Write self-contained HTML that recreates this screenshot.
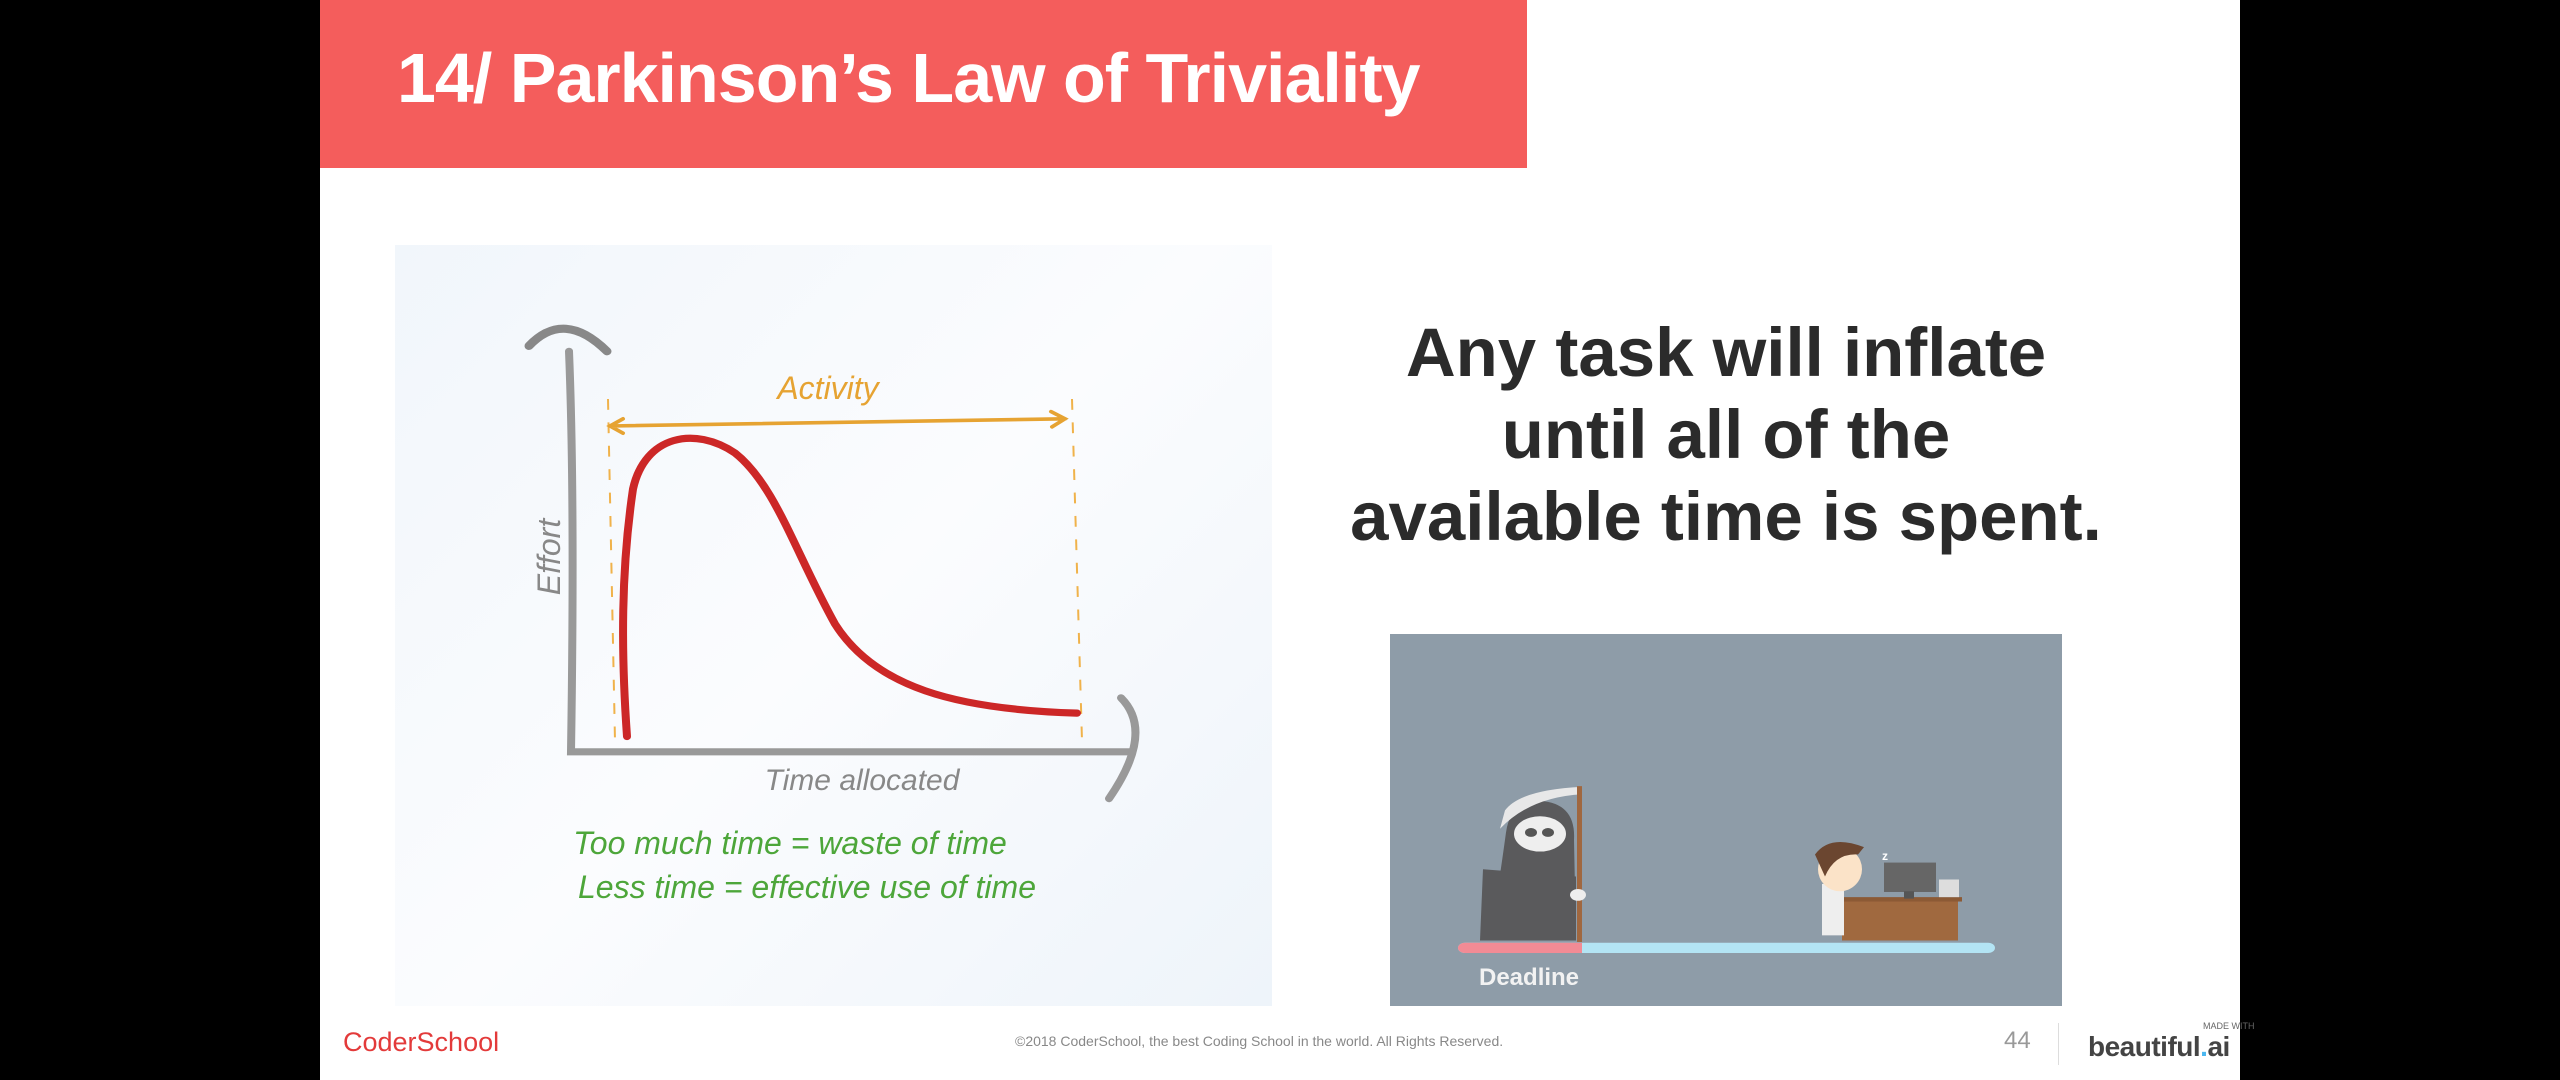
<!DOCTYPE html>
<html><head><meta charset="utf-8"><style>
*{margin:0;padding:0;box-sizing:border-box}
body{width:2560px;height:1080px;background:#000;position:relative;overflow:hidden;font-family:"Liberation Sans",sans-serif}
#slide{position:absolute;left:320px;top:0;width:1920px;height:1080px;background:#fff}
#bar{position:absolute;left:320px;top:0;width:1207px;height:168px;background:#f45d5c}
#title{position:absolute;left:397px;top:38px;font-size:70px;font-weight:bold;color:#fff;white-space:nowrap;letter-spacing:-1px}
#chart{position:absolute;left:395px;top:245px;width:877px;height:761px;background:linear-gradient(135deg,#f1f6fb,#fbfcfe 50%,#eef4fa)}
#quote{position:absolute;left:1290px;top:312px;width:872px;text-align:center;font-size:69px;font-weight:bold;color:#2b2b2b;line-height:82px}
#anim{position:absolute;left:1390px;top:634px;width:672px;height:372px;background:#8e9ca8}
.ft{position:absolute;white-space:nowrap}
</style></head><body>
<div id="slide"></div>
<div id="bar"></div>
<div id="title">14/ Parkinson’s Law of Triviality</div>
<div id="chart"><svg width="877" height="761" viewBox="0 0 877 761">
<g transform="translate(0,-17) scale(1,0.9)">
<path d="M134 131 Q169 90 212 137" stroke="#888" stroke-width="9" fill="none" stroke-linecap="round"/>
<path d="M174 137 Q180 300 176 582 L737 582" stroke="#999" stroke-width="8" fill="none" stroke-linecap="round"/>
<path d="M726 522 Q760 560 714 634" stroke="#999" stroke-width="8" fill="none" stroke-linecap="round"/>
<path d="M213 190 L220 570 M677 190 L687 570" stroke="#f0b24a" stroke-width="2" stroke-dasharray="12 14" fill="none"/>
<path d="M215 220 L670 212 M228 212 L215 220 L228 228 M656 204 L670 212 L657 221" stroke="#e6a332" stroke-width="4" fill="none" stroke-linecap="round"/>
<path d="M232 565 C226 470 226 380 238 290 C250 230 300 220 340 250 C380 285 400 360 440 440 C480 510 560 535 682 539" stroke="#cc2727" stroke-width="8" fill="none" stroke-linecap="round"/>
</g>
<text x="433" y="154" font-family="Liberation Sans" font-style="italic" font-size="32" fill="#e6a332" text-anchor="middle">Activity</text>
<text transform="translate(165,312) rotate(-90)" font-family="Liberation Sans" font-style="italic" font-size="32" fill="#888" text-anchor="middle">Effort</text>
<text x="467" y="545" font-family="Liberation Sans" font-style="italic" font-size="30" fill="#888" text-anchor="middle">Time allocated</text>
<text x="395" y="609" font-family="Liberation Sans" font-style="italic" font-size="32" fill="#4da63a" text-anchor="middle">Too much time = waste of time</text>
<text x="412" y="653" font-family="Liberation Sans" font-style="italic" font-size="32" fill="#4da63a" text-anchor="middle">Less time = effective use of time</text>
</svg></div>
<div id="quote">Any task will inflate<br>until all of the<br>available time is spent.</div>
<div id="anim"><svg width="672" height="372" viewBox="0 0 672 372">
<g transform="scale(1,0.735)">
<path d="M100 417 Q110 330 116 270 Q120 228 150 227 Q186 230 184 280 L186 417 Z" fill="#5a5a5c"/>
<path d="M93 320 L186 330 L186 417 L90 417 Z" fill="#5a5a5c"/>
<ellipse cx="150" cy="272" rx="26" ry="24" fill="#eee"/>
<circle cx="141" cy="270" r="6" fill="#555"/><circle cx="158" cy="270" r="6" fill="#555"/>
<path d="M115 240 Q130 212 192 208 L192 218 Q140 222 110 265 Z" fill="#e8e8e8"/>
<rect x="187" y="207" width="5" height="212" fill="#a0673f"/>
<circle cx="188" cy="355" r="8" fill="#eee"/>
<rect x="68" y="420" width="537" height="14" rx="7" fill="#b3e4f4"/>
<path d="M75 420 H192 V434 H75 A7 7 0 0 1 75 420Z" fill="#f28b95"/>
<rect x="452" y="361" width="116" height="56" fill="#a0693f"/>
<rect x="448" y="358" width="124" height="6" fill="#8c5a35"/>
<rect x="494" y="311" width="52" height="40" fill="#666"/>
<rect x="514" y="350" width="10" height="10" fill="#555"/>
<rect x="549" y="334" width="20" height="24" fill="#ddd"/>
<rect x="440" y="345" width="12" height="16" fill="#c0392b"/>
<rect x="432" y="340" width="22" height="70" fill="#eee"/>
<ellipse cx="450" cy="320" rx="22" ry="30" fill="#fbe3c8"/>
<path d="M425 300 Q440 272 474 290 L468 300 Q445 298 435 330 Z" fill="#6b4630"/>
</g>
<text x="492" y="226" font-family="Liberation Sans" font-weight="bold" font-size="12" fill="#fff">z</text>
<text x="89" y="351" font-family="Liberation Sans" font-weight="bold" font-size="24" fill="#f2f2f2">Deadline</text>
</svg></div>
<div class="ft" style="left:343px;top:1027px;font-size:27px;color:#e33a3a">CoderSchool</div>
<div class="ft" style="left:1015px;top:1033px;font-size:14px;color:#888">©2018 CoderSchool, the best Coding School in the world. All Rights Reserved.</div>
<div class="ft" style="left:2004px;top:1027px;font-size:24px;color:#999">44</div>
<div style="position:absolute;left:2058px;top:1023px;width:1px;height:42px;background:#ddd"></div>
<div class="ft" style="left:2203px;top:1021px;font-size:9px;color:#666">MADE WITH</div>
<div class="ft" style="left:2088px;top:1031px;font-size:28px;font-weight:bold;color:#444;letter-spacing:-0.5px">beautiful<span style="color:#49b6f0">.</span>ai</div>
</body></html>
